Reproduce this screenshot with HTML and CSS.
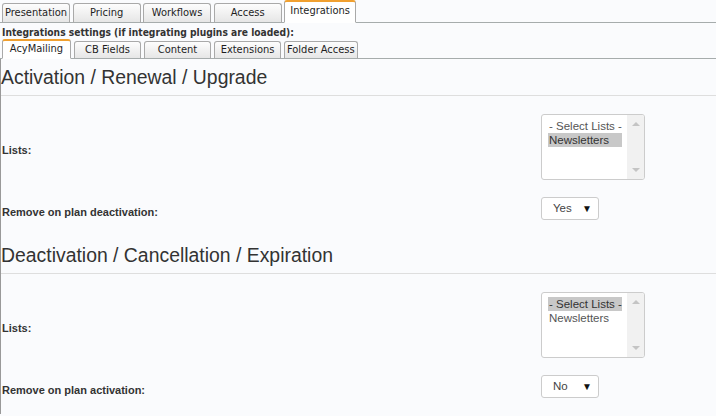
FILE: index.html
```html
<!DOCTYPE html>
<html lang="en">
<head>
    <meta charset="UTF-8">
    <title>Integrations</title>
    <link rel="stylesheet" href="styles.css">
</head>
<body>

<div class="tabs">
    <div class="tab">Presentation</div>
    <div class="tab">Pricing</div>
    <div class="tab">Workflows</div>
    <div class="tab">Access</div>
    <div class="tab active">Integrations</div>
</div>

<div class="intro">Integrations settings (if integrating plugins are loaded):</div>

<div class="tabs subtabs">
    <div class="tab active">AcyMailing</div>
    <div class="tab">CB Fields</div>
    <div class="tab">Content</div>
    <div class="tab">Extensions</div>
    <div class="tab">Folder Access</div>
</div>

<div class="panel">
    <h3 class="section-title">Activation / Renewal / Upgrade</h3>
    <div class="row row-list">
        <label>Lists:</label>
        <div class="listbox">
            <div class="options">
                <div class="option">- Select Lists -</div>
                <div class="option selected">Newsletters</div>
            </div>
            <div class="scrollbar"><span class="up"></span><span class="down"></span></div>
        </div>
    </div>
    <div class="row">
        <label>Remove on plan deactivation:</label>
        <div class="dropdown">Yes<span class="caret">&#9660;</span></div>
    </div>

    <h3 class="section-title">Deactivation / Cancellation / Expiration</h3>
    <div class="row row-list">
        <label>Lists:</label>
        <div class="listbox">
            <div class="options">
                <div class="option selected">- Select Lists -</div>
                <div class="option">Newsletters</div>
            </div>
            <div class="scrollbar"><span class="up"></span><span class="down"></span></div>
        </div>
    </div>
    <div class="row">
        <label>Remove on plan activation:</label>
        <div class="dropdown">No<span class="caret">&#9660;</span></div>
    </div>
</div>

</body>
</html>
```

FILE: styles.css
```css
body {
    margin: 0;
    background-color: #fafbfd;
    font-family: "Liberation Sans", Arial, sans-serif;
    color: #333;
}
.tabs {
    display: flex;
    align-items: flex-end;
    height: 22px;
    padding-left: 2px;
    border-bottom: 1px solid #a6acac;
}
.tab {
    min-width: 62px;
    height: 18px;
    line-height: 18px;
    padding: 0 2px;
    margin-right: 2.5px;
    margin-bottom: -1px;
    border: 1px solid #a9a9a9;
    border-bottom-color: #a6acac;
    border-radius: 3px 3px 0 0;
    background: linear-gradient(#fdfdfd, #e6e6e6);
    font-family: "DejaVu Sans Condensed", "DejaVu Sans", sans-serif;
    font-size: 11px;
    color: #1e1e1e;
    text-align: center;
    white-space: nowrap;
}
.tab.active {
    height: 20px;
    padding: 0 4px;
    background: #fff;
    border-top: 2px solid #f0a030;
    border-bottom-color: #fff;
    line-height: 18px;
}
.intro {
    height: 15px;
    line-height: 15px;
    padding-left: 2px;
    margin-top: 2px;
    font-family: "DejaVu Sans Condensed", "DejaVu Sans", sans-serif;
    font-size: 10.2px;
    font-weight: bold;
    color: #333;
}
.subtabs {
    height: 18px;
}
.subtabs .tab {
    min-width: 61px;
    height: 16px;
    line-height: 16px;
    margin-right: 3px;
}
.subtabs .tab.active {
    height: 17px;
    padding: 0 3px;
}
.panel {
    border-left: 1px solid #999;
    padding-bottom: 16px;
}
.section-title {
    margin: 0;
    padding: 6px 0 6px 0;
    font-size: 19.4px;
    line-height: 24px;
    font-weight: normal;
    color: #333;
    border-bottom: 1px solid #dedede;
}
.row + .section-title {
    margin-top: 17px;
}
.row {
    display: grid;
    grid-template-columns: 540px auto;
    align-items: center;
    margin-top: 17px;
}
.row-list {
    margin-top: 18px;
}
.row label {
    padding-left: 1px;
    padding-top: 6px;
    font-size: 11px;
    font-weight: bold;
    color: #333;
}
.listbox {
    display: flex;
    width: 102px;
    height: 64px;
    border: 1px solid #ccc;
    border-radius: 3px;
    background: #fff;
    overflow: hidden;
}
.options {
    flex: 1;
    padding: 4px 0 0 6px;
    font-size: 11.5px;
    color: #555;
}
.option {
    width: 74px;
    height: 14px;
    line-height: 14px;
    padding-left: 1px;
    box-sizing: border-box;
}
.option.selected {
    background-color: #c8c8c8;
    color: #333;
}
.scrollbar {
    position: relative;
    width: 17px;
    background-color: #f1f1f1;
}
.scrollbar span {
    position: absolute;
    left: 5px;
    width: 0;
    height: 0;
    border-left: 4px solid transparent;
    border-right: 4px solid transparent;
}
.scrollbar .up {
    top: 7px;
    border-bottom: 4px solid #c4c4c4;
}
.scrollbar .down {
    bottom: 7px;
    border-top: 4px solid #c4c4c4;
}
.dropdown {
    position: relative;
    width: 45px;
    height: 21px;
    line-height: 21px;
    padding-left: 11px;
    border: 1px solid #ccc;
    border-radius: 3px;
    background: #fff;
    font-size: 11.5px;
    color: #444;
}
.caret {
    position: absolute;
    right: 6px;
    top: 0;
    font-size: 10px;
    color: #111;
}
```
